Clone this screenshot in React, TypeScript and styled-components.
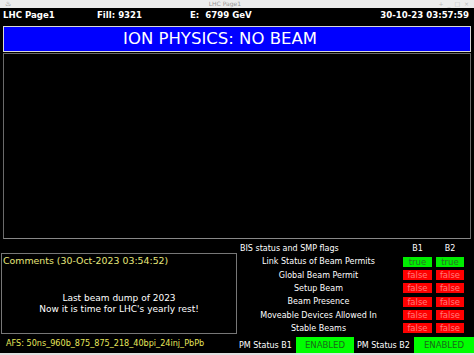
import React from "react";
import styled, { createGlobalStyle } from "styled-components";

const GlobalStyle = createGlobalStyle`
  html, body {
    margin: 0;
    padding: 0;
    background: #000;
  }
  body {
    font-family: "DejaVu Sans", "Liberation Sans", sans-serif;
    width: 474px;
    height: 355px;
    overflow: hidden;
  }
`;

type Flag = { label: string; b1: boolean; b2: boolean };

const flags: Flag[] = [
  { label: "Link Status of Beam Permits", b1: true, b2: true },
  { label: "Global Beam Permit", b1: false, b2: false },
  { label: "Setup Beam", b1: false, b2: false },
  { label: "Beam Presence", b1: false, b2: false },
  { label: "Moveable Devices Allowed In", b1: false, b2: false },
  { label: "Stable Beams", b1: false, b2: false },
];

function App() {
  return (
    <Page>
      <GlobalStyle />
      <TitleBar>
        <TitleIcon>♨</TitleIcon>
        <TitleText>LHC Page1</TitleText>
        <TitleButtons>+ _ □ ×</TitleButtons>
      </TitleBar>
      <Header>
        <span>LHC Page1</span>
        <span>Fill: 9321</span>
        <span>E:&nbsp;&nbsp;6799 GeV</span>
        <DateCell>30-10-23 03:57:59</DateCell>
      </Header>
      <Banner>ION PHYSICS: NO BEAM</Banner>
      <MainArea />
      <Bottom>
        <LeftPanel>
          <CommentsBox>
            <CommentsTitle>Comments (30-Oct-2023 03:54:52)</CommentsTitle>
            <Message>
              Last beam dump of 2023
              <br />
              Now it is time for LHC's yearly rest!
            </Message>
          </CommentsBox>
          <Afs>AFS: 50ns_960b_875_875_218_40bpi_24inj_PbPb</Afs>
        </LeftPanel>
        <RightPanel>
          <FlagGrid>
            <FlagTitle>BIS status and SMP flags</FlagTitle>
            <ColHead>B1</ColHead>
            <ColHead>B2</ColHead>
            {flags.map((f) => (
              <React.Fragment key={f.label}>
                <FlagLabel>{f.label}</FlagLabel>
                <Badge $on={f.b1}>{f.b1 ? "true" : "false"}</Badge>
                <Badge $on={f.b2}>{f.b2 ? "true" : "false"}</Badge>
              </React.Fragment>
            ))}
          </FlagGrid>
          <PmRow>
            <PmLabel>PM Status B1</PmLabel>
            <PmState>ENABLED</PmState>
            <PmLabel>PM Status B2</PmLabel>
            <PmState $wide>ENABLED</PmState>
          </PmRow>
        </RightPanel>
      </Bottom>
      <BottomStrip />
    </Page>
  );
}

export default App;

const Page = styled.div`
  width: 474px;
  height: 355px;
  display: flex;
  flex-direction: column;
  background: #000;
  color: #fff;
`;

const TitleBar = styled.div`
  height: 8px;
  background: #ececec;
  display: flex;
  align-items: center;
  justify-content: space-between;
  padding: 0 4px 0 5px;
  font-size: 6px;
  color: #999;
  line-height: 8px;
`;

const TitleIcon = styled.span`
  font-size: 7px;
  color: #777;
`;

const TitleText = styled.span`
  font-size: 6px;
  color: #999;
`;

const TitleButtons = styled.span`
  font-size: 6px;
  color: #bbb;
  letter-spacing: 1px;
`;

const Header = styled.div`
  height: 15px;
  display: grid;
  grid-template-columns: 94px 93px 1fr auto;
  align-items: center;
  padding: 0 5px 0 3px;
  font-size: 8.6px;
  font-weight: bold;
  color: #fff;
`;

const DateCell = styled.span`
  text-align: right;
`;

const Banner = styled.div`
  margin: 3px 3px 0;
  height: 24px;
  border: 1px solid #d8d8d8;
  background: #0000ff;
  color: #fff;
  font-size: 16.5px;
  display: flex;
  align-items: center;
  justify-content: center;
  padding-right: 34px;
`;

const MainArea = styled.div`
  margin: 1px 3px 0;
  height: 186px;
  border: 1px solid #6a6a6a;
  border-bottom-color: #888;
`;

const Bottom = styled.div`
  flex: 1;
  display: grid;
  grid-template-columns: 237px 1fr;
`;

const LeftPanel = styled.div`
  display: flex;
  flex-direction: column;
  padding-top: 14px;
`;

const CommentsBox = styled.div`
  height: 79px;
  margin-left: 1px;
  border: 1px solid #777;
  display: flex;
  flex-direction: column;
`;

const CommentsTitle = styled.div`
  font-size: 9.4px;
  color: #e6e67a;
  padding: 1px 0 0 1px;
`;

const Message = styled.div`
  flex: 1;
  display: flex;
  align-items: center;
  justify-content: center;
  text-align: center;
  font-size: 9px;
  line-height: 11px;
  color: #fff;
  padding-top: 10px;
`;

const Afs = styled.div`
  font-size: 8.1px;
  color: #e6e65a;
  padding: 4px 0 0 6px;
`;

const RightPanel = styled.div`
  display: flex;
  flex-direction: column;
  padding-top: 3px;
`;

const FlagGrid = styled.div`
  display: grid;
  grid-template-columns: 161px 29px 28px;
  grid-auto-rows: 13.3px;
  column-gap: 4px;
  align-items: center;
  margin-left: 1px;
`;

const FlagTitle = styled.div`
  font-size: 8px;
  color: #fff;
  padding-left: 2px;
`;

const ColHead = styled.div`
  font-size: 8px;
  text-align: center;
`;

const FlagLabel = styled.div`
  font-size: 8px;
  text-align: center;
  white-space: nowrap;
`;

const Badge = styled.div<{ $on: boolean }>`
  height: 10px;
  line-height: 10px;
  font-size: 8.5px;
  text-align: center;
  background: ${({ $on }) => ($on ? "#00ee00" : "#ff0000")};
  color: ${({ $on }) => ($on ? "#2b6e2b" : "#ff7a7a")};
`;

const PmRow = styled.div`
  margin-top: 2px;
  height: 16px;
  display: flex;
  align-items: stretch;
`;

const PmLabel = styled.div`
  width: 59px;
  font-size: 8px;
  display: flex;
  align-items: center;
  padding-left: 2px;
  box-sizing: border-box;
  white-space: nowrap;
`;

const PmState = styled.div<{ $wide?: boolean }>`
  width: ${({ $wide }) => ($wide ? "60px" : "58px")};
  margin-right: ${({ $wide }) => ($wide ? "0" : "1px")};
  background: #00ff00;
  color: #1a6b1a;
  font-size: 8.5px;
  display: flex;
  align-items: center;
  justify-content: center;
`;

const BottomStrip = styled.div`
  height: 2px;
  background: #e0e0e0;
`;
